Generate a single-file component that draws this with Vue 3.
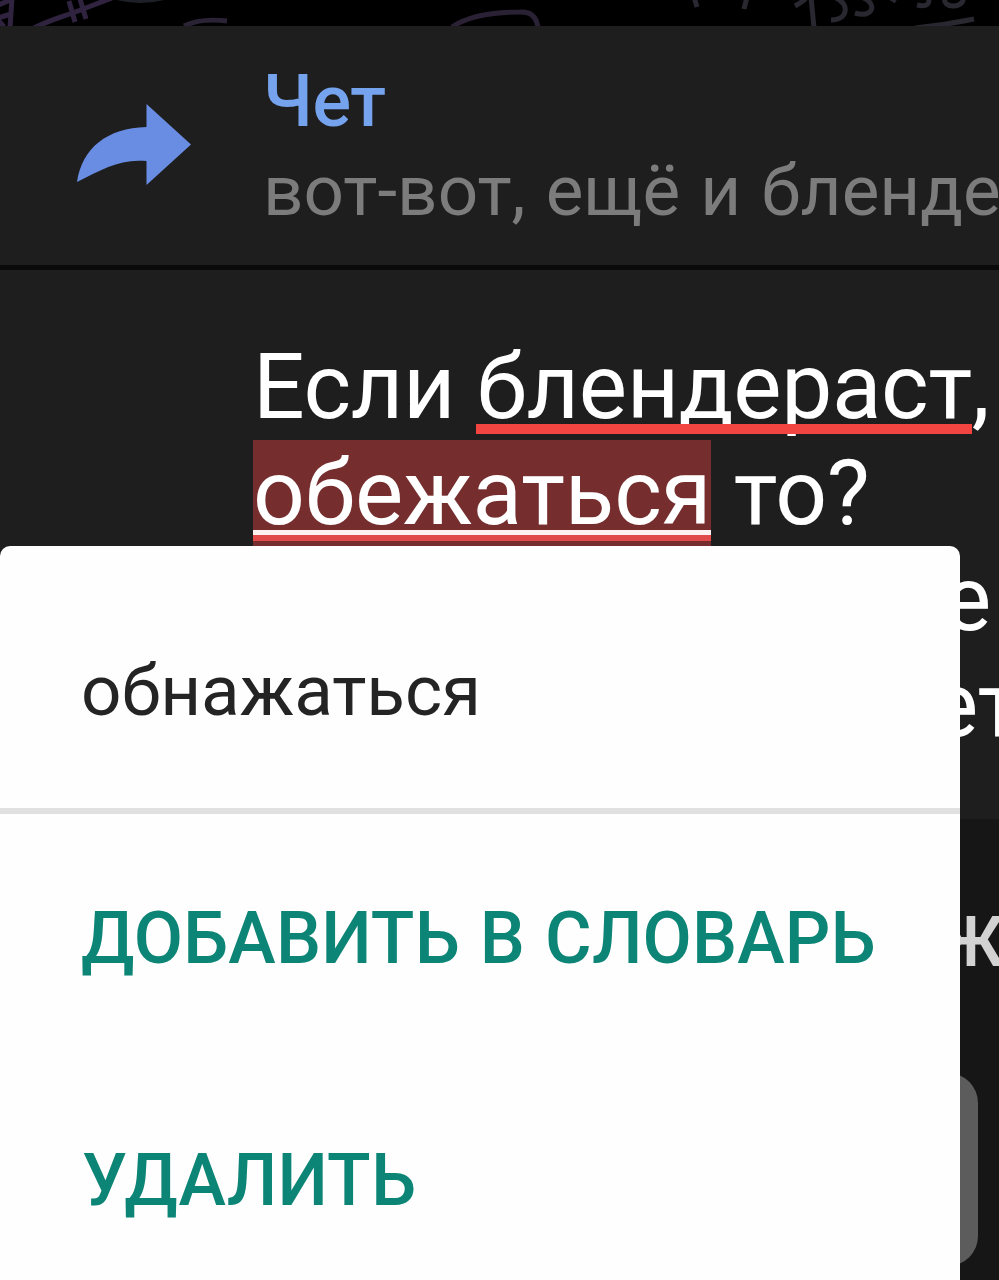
<script setup>
const actions = [
  { label: 'ДОБАВИТЬ В СЛОВАРЬ', cls: 'add' },
  { label: 'УДАЛИТЬ', cls: 'remove' },
]
</script>

<template>
  <div class="screen">
    <svg class="wallpaper" viewBox="0 0 999 26" fill="none" stroke-width="5">
      <g stroke="#30233f">
        <path d="M12 -2L10 28M-2 5L13 -1M-2 18L11 14M-2 20L4 27" />
        <path d="M34 28C50 20 62 17 78 11L112 -2M69 1L75 22M80 -1L86 19" />
        <path d="M184 26C196 20 210 19 227 21" stroke="#2a2235" />
        <path d="M452 27C468 16 490 12 520 12Q536 11 538 28" stroke="#2a2135" />
      </g>
      <path d="M117 -2Q140 4 164 -2" stroke="#1d2027" stroke-width="4" />
      <g stroke="#29272f">
        <path d="M694 -3L697 7M747 -3L744 9" />
        <path d="M795 6Q806 0 808 -5M811 -3L814 28" />
        <path d="M836 -2C850 4 848 20 831 20M861 -3C878 2 874 19 855 13" />
        <path d="M891 -2L896 1M928 -3Q932 8 917 5M945 -3C941 10 966 8 963 -3" />
        <path d="M915 28Q945 25 974 19" />
      </g>
    </svg>

    <header class="reply">
      <svg class="arrow" viewBox="0 0 116 82">
        <path d="M70.500 1L115 41.500L70.500 82V58C44 55.500 27 66 1 79C6 45 31 25 70.500 24Z" fill="#698de2" />
      </svg>
      <div class="quote">
        <div class="name">Чет</div>
        <div class="message">вот-вот, ещё и бленде</div>
      </div>
    </header>

    <main class="editor">
      <div class="line">Если <span class="misspelled">блендераст</span>,</div>
      <div class="line"><span class="selected">обежаться</span> то?</div>
      <div class="line third">е</div>
      <div class="line fourth">ет</div>
    </main>

    <footer class="toolbar">
      <div class="bold">Ж</div>
      <div class="key"></div>
    </footer>

    <div class="popup">
      <div class="suggestion">обнажаться</div>
      <div v-for="a in actions" :key="a.cls" class="action" :class="a.cls">{{ a.label }}</div>
    </div>
  </div>
</template>

<style>
body { margin: 0; background: #161616; }
</style>

<style scoped>
.screen {
  position: relative;
  width: 999px;
  height: 1280px;
  overflow: hidden;
  display: flex;
  flex-direction: column;
  background: #161616;
  font-family: Roboto, "Noto Sans", sans-serif;
  white-space: nowrap;
}
.wallpaper { display: block; flex: none; width: 999px; height: 26px; background: #000; }
.reply {
  flex: none;
  box-sizing: border-box;
  height: 244px;
  display: flex;
  background: #1e1e1e;
  border-bottom: 5px solid #0a0a0a;
}
.arrow { flex: none; width: 116px; height: 82px; margin: 77px 71px 0 76px; }
.quote { padding-top: 32px; font-size: 71px; }
.name { line-height: 87px; font-size: 72px; letter-spacing: -0.300px; font-weight: 500; color: #76a3ee; }
.message { line-height: 91px; color: #7c7c7c; word-spacing: 2.500px; }
.editor {
  flex: none;
  box-sizing: border-box;
  height: 549px;
  padding: 64px 0 0 253px;
  background: #1e1e1e;
  color: #fff;
  font-size: 91px;
  letter-spacing: -0.350px;
  overflow: hidden;
}
.line { height: 106px; line-height: 106px; }
.third { padding-left: 690px; }
.fourth { padding-left: 677px; }
.misspelled, .selected { position: relative; display: inline-block; height: 106px; }
.misspelled { margin-left: -1px; }
.misspelled::after {
  content: "";
  position: absolute;
  left: 0;
  right: 0;
  top: 90px;
  height: 10px;
  background: #f24542;
}
.selected { letter-spacing: -0.150px; background: #752d2e; }
.selected::after {
  content: "";
  position: absolute;
  left: 0;
  right: 0;
  top: 90px;
  height: 6px;
  border-top: 5px solid #fff1ef;
  background: #e04b49;
}
.toolbar { flex: none; height: 461px; background: #161616; }
.bold {
  height: 168px;
  padding: 81px 0 0 937px;
  box-sizing: border-box;
  line-height: 84px;
  font-size: 70px;
  font-weight: 500;
  color: #d2d2d2;
}
.key { width: 178px; height: 193px; margin: 86px 0 0 800px; border-radius: 30px; background: #5c5c5c; }
.popup {
  position: absolute;
  left: 0;
  top: 546px;
  width: 960px;
  height: 760px;
  box-sizing: border-box;
  border-radius: 10px;
  background: #fefefe;
  font-size: 71px;
}
.suggestion {
  box-sizing: border-box;
  height: 268px;
  padding: 103px 0 0 81px;
  line-height: 84px;
  color: #242424;
  border-bottom: 6px solid #e0e0e0;
}
.action {
  padding-left: 81px;
  height: 242px;
  line-height: 250px;
  font-size: 71.500px;
  letter-spacing: 0.150px;
  word-spacing: 2px;
  font-weight: 500;
  color: #0d8576;
}
.remove { padding-left: 82px; }
</style>
